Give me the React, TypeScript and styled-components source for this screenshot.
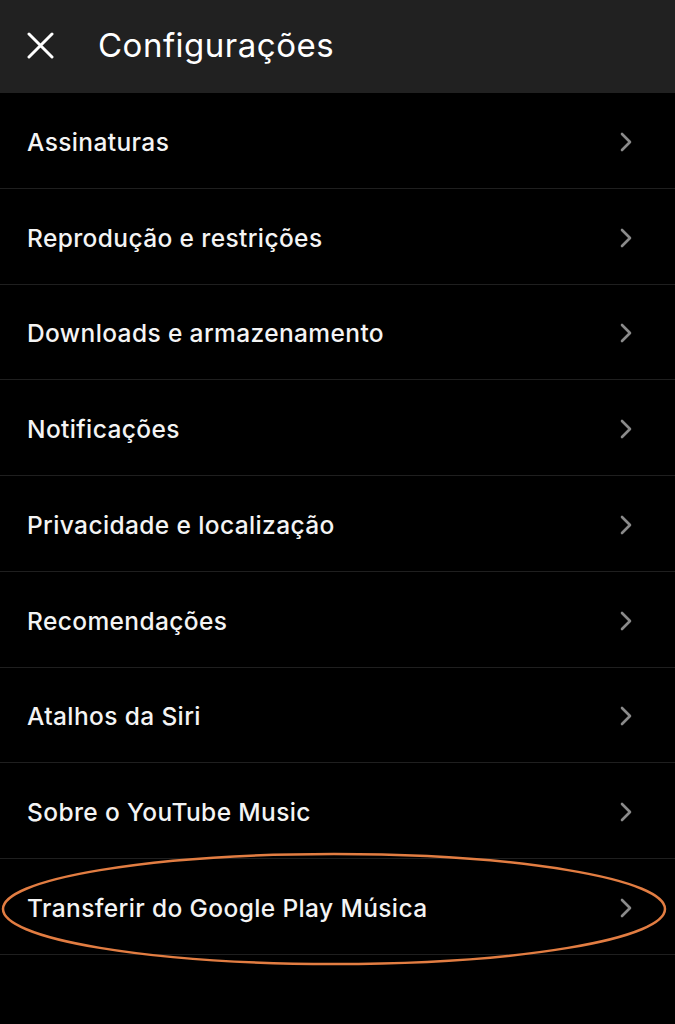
import React from "react";
import styled, { createGlobalStyle } from "styled-components";

const Global = createGlobalStyle`
  html, body { margin: 0; padding: 0; background: #000; }
  body { font-family: Inter, "Noto Sans", sans-serif; -webkit-font-smoothing: antialiased; }
`;

const Page = styled.div`
  position: relative;
  width: 675px;
  min-height: 1024px;
  background: #000;
  color: #fff;
  overflow: hidden;
`;

const Header = styled.header`
  height: 93px;
  background: #212121;
  display: flex;
  align-items: center;
  padding-left: 27px;
  padding-bottom: 3px;
  gap: 44px;
  box-sizing: border-box;
`;

const Title = styled.h1`
  margin: 0;
  font-size: 33px;
  font-weight: 400;
  letter-spacing: 0.5px;
  color: #fff;
`;

const CloseIcon = styled.svg`
  width: 27px;
  height: 27px;
  display: block;
`;

const List = styled.ul`
  list-style: none;
  margin: 0;
  padding: 0;
`;

const Row = styled.li`
  height: 95.75px;
  box-sizing: border-box;
  border-bottom: 1.5px solid #1f1f1f;
  display: flex;
  align-items: center;
  justify-content: space-between;
  padding: 3px 42px 0 27px;
`;

const Label = styled.span`
  font-size: 24.5px;
  font-weight: 500;
  color: #f4f4f4;
  letter-spacing: 0.38px;
`;

const Chevron = styled.svg`
  width: 14px;
  height: 22px;
  display: block;
`;

const Oval = styled.svg`
  position: absolute;
  left: 0;
  top: 850px;
  width: 675px;
  height: 120px;
  pointer-events: none;
`;

const items = [
  "Assinaturas",
  "Reprodução e restrições",
  "Downloads e armazenamento",
  "Notificações",
  "Privacidade e localização",
  "Recomendações",
  "Atalhos da Siri",
  "Sobre o YouTube Music",
  "Transferir do Google Play Música",
];

export default function App() {
  return (
    <Page>
      <Global />
      <Header>
        <CloseIcon viewBox="0 0 27 27">
          <path d="M2 2 L25 25 M25 2 L2 25" stroke="#fff" strokeWidth="3" strokeLinecap="round" />
        </CloseIcon>
        <Title>Configurações</Title>
      </Header>
      <List>
        {items.map((t) => (
          <Row key={t}>
            <Label>{t}</Label>
            <Chevron viewBox="0 0 14 22">
              <path d="M3 3 L11 11 L3 19" fill="none" stroke="#8a8a8a" strokeWidth="2.6" strokeLinecap="round" strokeLinejoin="round" />
            </Chevron>
          </Row>
        ))}
      </List>
      <Oval viewBox="0 0 675 120">
        <ellipse cx="334" cy="59" rx="331" ry="55" fill="none" stroke="#e27d42" strokeWidth="2.5" />
      </Oval>
    </Page>
  );
}
